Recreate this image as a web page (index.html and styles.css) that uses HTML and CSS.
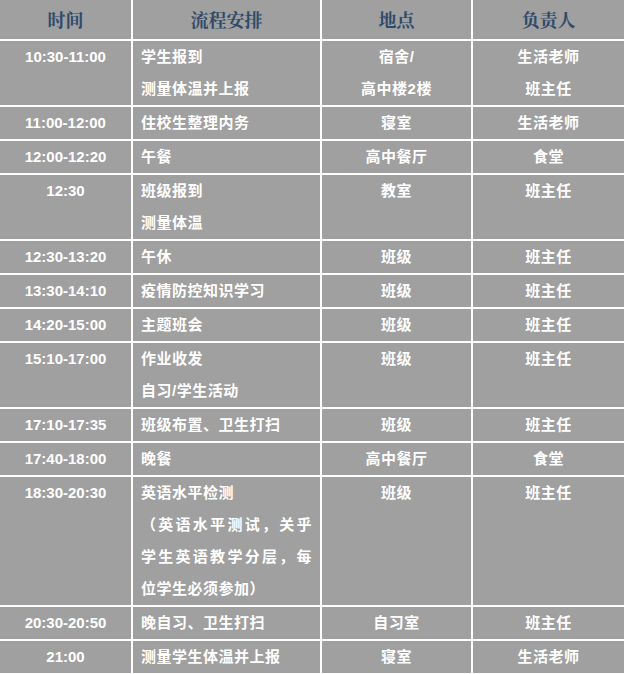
FILE: index.html
```html
<!DOCTYPE html>
<html lang="zh-CN">
<head>
<meta charset="utf-8">
<title>日程安排</title>
<link rel="stylesheet" href="styles.css">
</head>
<body>
<div class="schedule">
  <div class="cell head">时间</div>
  <div class="cell head">流程安排</div>
  <div class="cell head">地点</div>
  <div class="cell head">负责人</div>

  <div class="cell time">10:30-11:00</div>
  <div class="cell task">学生报到<br>测量体温并上报</div>
  <div class="cell mid">宿舍/<br>高中楼2楼</div>
  <div class="cell mid">生活老师<br>班主任</div>

  <div class="cell time">11:00-12:00</div>
  <div class="cell task">住校生整理内务</div>
  <div class="cell mid">寝室</div>
  <div class="cell mid">生活老师</div>

  <div class="cell time">12:00-12:20</div>
  <div class="cell task">午餐</div>
  <div class="cell mid">高中餐厅</div>
  <div class="cell mid">食堂</div>

  <div class="cell time">12:30</div>
  <div class="cell task">班级报到<br>测量体温</div>
  <div class="cell mid">教室</div>
  <div class="cell mid">班主任</div>

  <div class="cell time">12:30-13:20</div>
  <div class="cell task">午休</div>
  <div class="cell mid">班级</div>
  <div class="cell mid">班主任</div>

  <div class="cell time">13:30-14:10</div>
  <div class="cell task">疫情防控知识学习</div>
  <div class="cell mid">班级</div>
  <div class="cell mid">班主任</div>

  <div class="cell time">14:20-15:00</div>
  <div class="cell task">主题班会</div>
  <div class="cell mid">班级</div>
  <div class="cell mid">班主任</div>

  <div class="cell time">15:10-17:00</div>
  <div class="cell task">作业收发<br>自习/学生活动</div>
  <div class="cell mid">班级</div>
  <div class="cell mid">班主任</div>

  <div class="cell time">17:10-17:35</div>
  <div class="cell task">班级布置、卫生打扫</div>
  <div class="cell mid">班级</div>
  <div class="cell mid">班主任</div>

  <div class="cell time">17:40-18:00</div>
  <div class="cell task">晚餐</div>
  <div class="cell mid">高中餐厅</div>
  <div class="cell mid">食堂</div>

  <div class="cell time">18:30-20:30</div>
  <div class="cell task">
    <span class="line">英语水平检测</span>
    <span class="line spread">（英语水平测试，关乎</span>
    <span class="line spread">学生英语教学分层，每</span>
    <span class="line">位学生必须参加）</span>
  </div>
  <div class="cell mid">班级</div>
  <div class="cell mid">班主任</div>

  <div class="cell time">20:30-20:50</div>
  <div class="cell task">晚自习、卫生打扫</div>
  <div class="cell mid">自习室</div>
  <div class="cell mid">班主任</div>

  <div class="cell time">21:00</div>
  <div class="cell task">测量学生体温并上报</div>
  <div class="cell mid">寝室</div>
  <div class="cell mid">生活老师</div>
</div>
</body>
</html>
```

FILE: styles.css
```css
html, body {
  margin: 0;
  padding: 0;
  background: #ffffff;
}

.schedule {
  display: grid;
  grid-template-columns: 131px 187px 149px 151px;
  gap: 2px;
  width: 624px;
}

.cell {
  background: #a0a0a0;
  color: #ffffff;
  font-family: "Liberation Sans", "Noto Sans CJK SC", sans-serif;
  font-size: 15px;
  font-weight: 700;
  line-height: 32px;
}

.head {
  height: 39px;
  line-height: 39px;
  text-align: center;
  color: #2f4a6a;
  font-family: "Noto Serif CJK SC", "Liberation Serif", "Noto Sans CJK SC", serif;
  font-size: 18px;
  font-weight: 700;
}

.time {
  text-align: center;
}

.task {
  padding: 0 8px;
  letter-spacing: 0.5px;
}

.mid {
  text-align: center;
  letter-spacing: 0.5px;
}

.line {
  display: block;
}

.spread {
  text-align: justify;
  text-align-last: justify;
}
```
